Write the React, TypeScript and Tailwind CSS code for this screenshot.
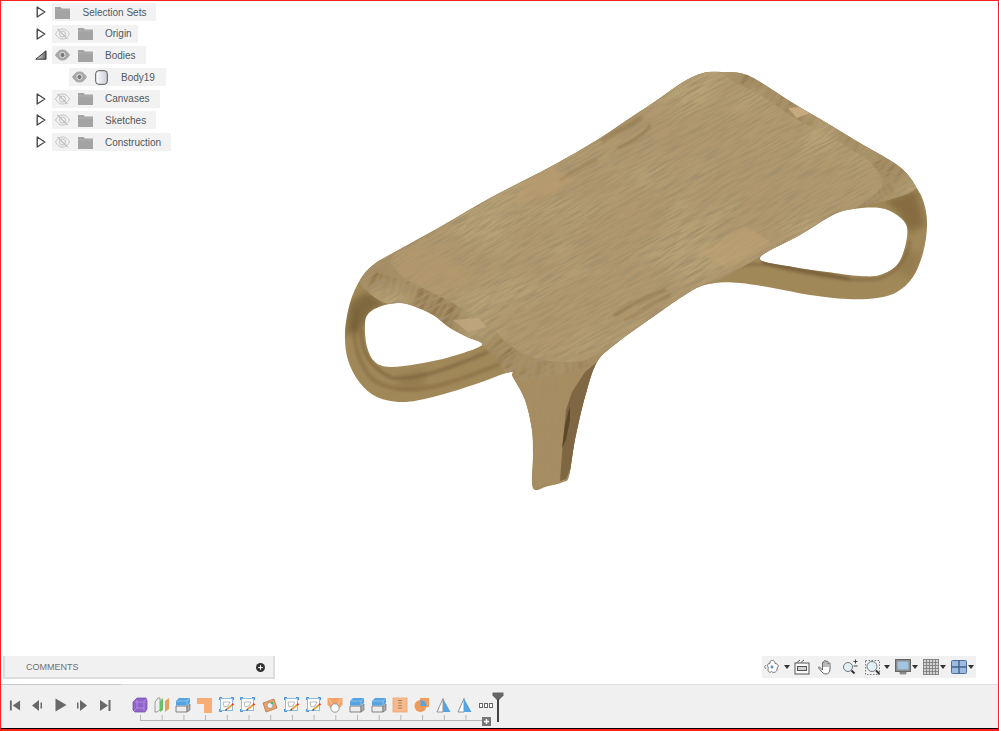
const font = { fontFamily: '"Liberation Sans", Arial, sans-serif' };

const Arrow = () => (
  <svg width="10" height="12" viewBox="0 0 10 12" className="shrink-0 ml-[1px]">
    <path d="M1.2 1 L8.8 6 L1.2 11 Z" fill="#fff" stroke="#4a4a4a" strokeWidth="1.4" strokeLinejoin="round" />
  </svg>
);

const ArrowOpen = () => (
  <svg width="12" height="10" viewBox="0 0 12 10" className="shrink-0">
    <defs>
      <linearGradient id="openFill" x1="0" x2="1" y1="0" y2="0">
        <stop offset="0" stopColor="#efefef" />
        <stop offset="1" stopColor="#666" />
      </linearGradient>
    </defs>
    <path d="M0.8 9.2 L11 0.8 V9.2 Z" fill="url(#openFill)" stroke="#333" strokeWidth="1" />
  </svg>
);

const Folder = () => (
  <svg width="15" height="13" viewBox="0 0 15 13" className="shrink-0">
    <path d="M0 1 H5.5 L7 2.5 H15 V13 H0 Z" fill="#a3a3a3" />
    <path d="M0 4 H15" stroke="#b5b5b5" strokeWidth="0.7" />
  </svg>
);

const Eye = ({ off }: { off?: boolean }) => (
  <svg width="15" height="12" viewBox="0 0 15 12" className="shrink-0">
    <path
      d="M0.5 6 C3 2 5 1 7.5 1 C10 1 12 2 14.5 6 C12 10 10 11 7.5 11 C5 11 3 10 0.5 6 Z"
      fill={off ? "none" : "#a8a8a8"}
      stroke={off ? "#c0c0c0" : "#a8a8a8"}
      strokeWidth="1"
    />
    <circle cx="7.5" cy="6" r={off ? 3 : 2.6} fill={off ? "none" : "#777"} stroke={off ? "#c0c0c0" : "#e8e8e8"} strokeWidth="1" />
    {off && <path d="M2.5 1 L12.5 11" stroke="#c0c0c0" strokeWidth="1.2" />}
  </svg>
);

const BodyIcon = () => (
  <svg width="13" height="15" viewBox="0 0 13 15" className="shrink-0">
    <defs>
      <linearGradient id="bodyFill" x1="0" x2="1" y1="0" y2="0">
        <stop offset="0" stopColor="#ffffff" />
        <stop offset="1" stopColor="#c9ced6" />
      </linearGradient>
    </defs>
    <rect x="0.7" y="0.7" width="11.6" height="13.6" rx="3" fill="url(#bodyFill)" stroke="#555" strokeWidth="1" />
  </svg>
);

const rows = [
  { name: "Selection Sets", arrow: true, noEye: true, width: "w-[104px]" },
  { name: "Origin", arrow: true, off: true, width: "w-[86px]" },
  { name: "Bodies", open: true, width: "w-[94px]" },
  { name: "Body19", child: true, width: "w-[97px]" },
  { name: "Canvases", arrow: true, off: true, width: "w-[108px]" },
  { name: "Sketches", arrow: true, off: true, width: "w-[104px]" },
  { name: "Construction", arrow: true, off: true, width: "w-[119px]" },
];

const Tree = () => (
  <div className="flex flex-col gap-[3.7px] pt-[2px] pl-[34px] h-[150px]">
    {rows.map((r) => (
      <div key={r.name} className="flex items-center h-[18px]">
        <div className="w-[17px] flex items-center justify-start shrink-0">
          {r.arrow && <Arrow />}
          {r.open && <ArrowOpen />}
        </div>
        <div className={`flex items-center h-[18px] bg-[#f2f2f2] text-[10px] text-[#505860] ${r.width} ${r.child ? "ml-[17px]" : ""}`}>
          {r.noEye ? (
            <>
              <span className="ml-[3px] flex"><Folder /></span>
              <span className="ml-[12.5px]">{r.name}</span>
            </>
          ) : r.child ? (
            <>
              <span className="ml-[3px] flex"><Eye /></span>
              <span className="ml-[8px] flex"><BodyIcon /></span>
              <span className="ml-[13px]">{r.name}</span>
            </>
          ) : (
            <>
              <span className="ml-[3px] flex"><Eye off={r.off} /></span>
              <span className="ml-[8px] flex"><Folder /></span>
              <span className="ml-[12px]">{r.name}</span>
            </>
          )}
        </div>
      </div>
    ))}
  </div>
);

// closed catmull-rom through page coordinates
const smooth = (pts: number[][]) => {
  const n = pts.length;
  let d = `M${pts[0][0]} ${pts[0][1]}`;
  for (let i = 0; i < n; i++) {
    const p0 = pts[(i - 1 + n) % n];
    const p1 = pts[i];
    const p2 = pts[(i + 1) % n];
    const p3 = pts[(i + 2) % n];
    const c1x = p1[0] + (p2[0] - p0[0]) / 6;
    const c1y = p1[1] + (p2[1] - p0[1]) / 6;
    const c2x = p2[0] - (p3[0] - p1[0]) / 6;
    const c2y = p2[1] - (p3[1] - p1[1]) / 6;
    d += ` C${c1x.toFixed(1)} ${c1y.toFixed(1)} ${c2x.toFixed(1)} ${c2y.toFixed(1)} ${p2[0]} ${p2[1]}`;
  }
  return d + " Z";
};

const outer = [
  [393, 253], [440, 227], [490, 198], [550, 167], [597, 140], [630, 118], [660, 98], [683, 82], [703, 73], [722, 72], [740, 73], [757, 80],
  [793, 103], [827, 123], [860, 143], [900, 167], [918, 190], [925, 207], [927, 227], [923, 253], [913, 277], [897, 292], [877, 298], [847, 299],
  [810, 295], [773, 288], [740, 283], [715, 283], [693, 290], [653, 317], [617, 343], [597, 362], [585, 397], [575, 440], [569, 476], [563, 482], [548, 486], [533, 488],
  [533, 455], [532, 430], [525, 400], [513, 377], [510, 372], [473, 385], [433, 397], [403, 402], [377, 397], [360, 383], [348, 360], [345, 333], [350, 303], [360, 280], [373, 265],
];
const holeL = [
  [400, 303], [385, 305], [370, 312], [365, 323], [367, 347], [375, 362], [390, 367], [417, 364], [450, 357], [482, 345], [467, 337], [450, 328], [433, 315], [413, 306],
];
const holeR = [
  [853, 209], [880, 208], [897, 215], [907, 227], [905, 247], [897, 265], [880, 275], [860, 276], [827, 272], [793, 267], [760, 258], [800, 235], [833, 215],
];
const plate = [
  [393, 253], [440, 227], [490, 198], [550, 167], [597, 140], [630, 118], [660, 98], [683, 82], [703, 73], [722, 72], [740, 73], [757, 80],
  [793, 103], [827, 123], [860, 143], [900, 167], [916, 188], [885, 201], [853, 209], [833, 215], [800, 235], [760, 257], [715, 282], [693, 290], [653, 317], [617, 343], [597, 362],
  [570, 372], [540, 378], [513, 380], [497, 360], [482, 345], [450, 328], [433, 315], [413, 306], [400, 303], [385, 303], [368, 292], [360, 280], [373, 265],
];
const panel = [
  [393, 256], [397, 270], [410, 281], [447, 300], [483, 320], [510, 345], [535, 358], [570, 362], [597, 355], [653, 317], [693, 290], [760, 257], [800, 235], [853, 209], [882, 186],
  [873, 165], [860, 155], [827, 135], [793, 117], [760, 95], [738, 84], [715, 72], [683, 80], [660, 98], [630, 118], [597, 140], [550, 167], [490, 198], [440, 227],
];

const silhouette = `${smooth(outer)} ${smooth(holeL)} ${smooth(holeR)}`;

const Table = () => (
  <svg viewBox="340 65 600 430" className="absolute left-[339px] top-[64px] w-[600px] h-[430px]">
    <defs>
      <clipPath id="sil">
        <path d={silhouette} clipRule="evenodd" />
      </clipPath>
      <clipPath id="plateClip">
        <path d={smooth(plate)} />
      </clipPath>
      <filter id="grain" x="0" y="0" width="100%" height="100%">
        <feTurbulence type="fractalNoise" baseFrequency="0.04 0.55" numOctaves="3" seed="7" />
        <feColorMatrix values="0 0 0 0 0.37  0 0 0 0 0.28  0 0 0 0 0.15  3.6 0 0 0 -1.5" />
      </filter>
      <filter id="blotch" x="0" y="0" width="100%" height="100%">
        <feTurbulence type="fractalNoise" baseFrequency="0.012 0.02" numOctaves="2" seed="21" />
        <feColorMatrix values="0 0 0 0 0.47  0 0 0 0 0.36  0 0 0 0 0.18  3.6 0 0 0 -1.6" />
      </filter>
      <filter id="legGrain" x="0" y="0" width="100%" height="100%">
        <feTurbulence type="fractalNoise" baseFrequency="0.28 0.025" numOctaves="2" seed="3" />
        <feColorMatrix values="0 0 0 0 0.38  0 0 0 0 0.27  0 0 0 0 0.12  3 0 0 0 -1.25" />
      </filter>
      <filter id="soft1">
        <feGaussianBlur stdDeviation="0.8" />
      </filter>
      <filter id="soft15">
        <feGaussianBlur stdDeviation="1.5" />
      </filter>
      <filter id="soft2">
        <feGaussianBlur stdDeviation="3" />
      </filter>
    </defs>

    <g clipPath="url(#sil)">
      <rect x="340" y="65" width="600" height="430" fill="#a08859" />

      {/* left loop */}
      <g fill="none" filter="url(#soft15)">
        <path d="M357 310 C352 335 354 355 370 377 C385 390 410 393 440 385 C460 380 480 372 500 364" stroke="#8f754a" strokeWidth="4" />
        <path d="M361 330 C361 350 370 368 392 378 C420 380 450 368 488 352" stroke="#856b43" strokeWidth="3" />
      </g>
      <path d="M345 335 L350 303 L366 292 L385 303 L370 312 L364 325 L358 332 Z" fill="#6b532f" opacity="0.6" filter="url(#soft2)" />
      <path d="M398 376 L425 370 L425 385 L400 390 Z" fill="#7a6037" opacity="0.3" filter="url(#soft2)" />

      {/* right loop */}
      <g fill="none" filter="url(#soft15)">
        <path d="M910 240 C908 258 898 272 878 279 C850 282 820 276 790 270 C770 265 755 262 740 266" stroke="#8b7146" strokeWidth="3" />
        <path d="M762 262 C790 268 815 272 850 279" stroke="#735c37" strokeWidth="3" />
      </g>
      <path d="M885 201 L916 190 L925 225 L908 233 L900 214 Z" fill="#7c6238" opacity="0.7" filter="url(#soft2)" />
      <path d="M905 250 L922 255 L912 278 L895 270 Z" fill="#7d6339" opacity="0.3" filter="url(#soft2)" />

      {/* front leg */}
      <path d="M495 355 L600 350 L597 362 L585 397 L575 440 L569 476 L563 482 L533 488 L533 455 L532 430 L525 400 Z" fill="#a68c62" />
      <rect x="505" y="360" width="100" height="130" filter="url(#legGrain)" />
      <path d="M597 362 L585 372 L572 392 L566 410 L563 440 L560 481 L566 479 L571 468 L575 440 L585 397 Z" fill="#7f6744" />
      <path d="M570 405 L565 425 L562 448 L566 440 L570 420 Z" fill="#5b4829" />

      {/* top of the table */}
      <path d={smooth(plate)} fill="#a68c62" />
      <g clipPath="url(#plateClip)">
        {/* cross grain on the two ends, under the panel */}
        <g fill="none" filter="url(#soft1)">
          <path d="M370 282 C385 290 395 290 405 293 C420 298 440 308 465 323 C480 333 490 342 505 360" stroke="#7b6138" strokeWidth="24" strokeDasharray="4 3 2 4 6 3 3 5 2 3" opacity="0.55" />
          <path d="M505 355 C525 370 550 372 592 362" stroke="#8a7148" strokeWidth="22" strokeDasharray="2 4 5 3" opacity="0.4" />
          <path d="M745 76 C765 90 793 110 827 129 C845 140 870 156 900 176" stroke="#7b6138" strokeWidth="16" strokeDasharray="5 3 2 6 3 7" opacity="0.45" />
          <path d="M892 188 C875 197 860 203 840 212" stroke="#7b6138" strokeWidth="10" strokeDasharray="3 3" opacity="0.4" />
        </g>
        <path d={smooth(panel)} fill="#b0976e" />
        <g transform="rotate(-30 640 280)">
          <rect x="150" y="-150" width="1000" height="860" filter="url(#blotch)" />
          <rect x="150" y="-150" width="1000" height="860" filter="url(#grain)" />
        </g>

        {/* pale end grain pieces */}
        <path d="M551 167 L575 180 L545 196 L515 205 L520 186 Z" fill="#bd9f71" opacity="0.55" filter="url(#soft15)" />
        <path d="M700 253 L725 268 L772 243 L745 226 Z" fill="#c0a274" opacity="0.6" filter="url(#soft15)" />
        <path d="M453 320 L478 318 L487 327 L468 332 Z" fill="#c0a57c" opacity="0.9" />
        <path d="M788 108 L802 107 L810 113 L797 118 Z" fill="#c9ad84" opacity="0.9" />
        <path d="M393 256 L397 270 L410 281 L440 296 L470 280 L440 250 Z" fill="#b89b6d" opacity="0.45" filter="url(#soft2)" />

        {/* knots */}
        <g fill="none" stroke="#7a6036" strokeLinecap="round" filter="url(#soft1)">
          <path d="M603 140 C615 133 630 125 640 118" strokeWidth="5" opacity="0.35" />
          <path d="M618 148 C632 142 645 134 650 125" strokeWidth="2" opacity="0.5" />
          <path d="M615 315 C630 305 645 296 665 290" strokeWidth="3" opacity="0.4" />
          <path d="M625 320 C640 312 655 302 670 295" strokeWidth="2" opacity="0.4" />
          <path d="M560 180 C572 172 585 165 597 160" strokeWidth="1.5" opacity="0.45" />
        </g>
      </g>
    </g>
  </svg>
);

const Caret = () => (
  <svg width="6" height="4" viewBox="0 0 6 4" className="shrink-0">
    <path d="M0 0 H6 L3 4 Z" fill="#333" />
  </svg>
);

const NavBar = () => (
  <div className="w-[214px] h-[22px] bg-[#f1f1f1] flex items-center pl-[2px]">
    {/* orbit */}
    <svg width="16" height="16" viewBox="0 0 16 16">
      <path d="M6 2.5 C8 0.5 11 1.5 11 4.5 C14 4.5 15.5 7.5 13 9 C14 12 10 15 7.5 12.5 C5 15 3 11 4.5 9 C2.5 7 4 3.5 6 4.5 Z" fill="#fff" stroke="#666" strokeWidth="0.9" />
      <path d="M2 6 L0.5 8 L2 10" stroke="#666" strokeWidth="0.8" fill="none" />
      <path d="M6.5 8 H9.5 M8 6.5 V9.5" stroke="#2b78c5" strokeWidth="1.2" />
    </svg>
    <span className="ml-[4px] flex"><Caret /></span>
    {/* look at */}
    <svg width="16" height="16" viewBox="0 0 16 16" className="ml-[4px]">
      <path d="M2.5 4 L6 1 M7 3.5 L10 1" stroke="#555" strokeWidth="1" />
      <rect x="1" y="4" width="14" height="11" fill="#fafafa" stroke="#555" strokeWidth="1" />
      <rect x="3.5" y="7.5" width="9" height="4" fill="#d0d0d0" stroke="#555" strokeWidth="1" />
    </svg>
    {/* pan hand */}
    <svg width="16" height="16" viewBox="0 0 16 16" className="ml-[8px]">
      <path d="M1.5 8 L4.5 11 V4 C4.5 2.8 6 2.8 6 4 V2.5 C6 1.2 8 1.2 8 2.5 V3 C8 1.8 10 1.8 10 3 V4.5 C10 3.6 12 3.6 12 4.5 V10 C12 13 10.5 15 8 15 C5.5 15 4.5 13.5 3 12 L0.8 9 C0.3 8 1 7.5 1.5 8 Z" fill="#fff" stroke="#555" strokeWidth="0.9" />
      <path d="M6 4 V8 M8 3 V8 M10 4 V8" stroke="#555" strokeWidth="0.8" />
    </svg>
    {/* zoom */}
    <svg width="16" height="16" viewBox="0 0 16 16" className="ml-[8px]">
      <circle cx="6" cy="8" r="4.5" fill="#dff0f7" stroke="#777" strokeWidth="1" />
      <path d="M9.5 11.5 L12.5 14.5" stroke="#333" strokeWidth="2" />
      <path d="M11.5 2.5 H15.5 M13.5 0.5 V4.5 M11.5 7 H15.5" stroke="#444" strokeWidth="1" />
    </svg>
    {/* fit */}
    <svg width="17" height="17" viewBox="0 0 17 17" className="ml-[7px]">
      <rect x="0.5" y="1.5" width="14" height="14" fill="none" stroke="#777" strokeWidth="1" strokeDasharray="1.5 1.5" />
      <circle cx="7" cy="7.5" r="5" fill="#e2f1f7" stroke="#777" strokeWidth="1" />
      <path d="M11 11.5 L14.5 15" stroke="#333" strokeWidth="2" />
    </svg>
    <span className="ml-[2px] flex"><Caret /></span>
    {/* display */}
    <svg width="16" height="16" viewBox="0 0 16 16" className="ml-[5px]">
      <rect x="0.5" y="0.5" width="15" height="12" fill="#8d8d8d" stroke="#666" />
      <rect x="2.5" y="2.5" width="11" height="8" fill="#a3c5e4" />
      <path d="M5 13 H11 V15 H5 Z" fill="#999" stroke="#777" strokeWidth="0.7" />
    </svg>
    <span className="ml-[1px] flex"><Caret /></span>
    {/* grid */}
    <svg width="16" height="16" viewBox="0 0 16 16" className="ml-[5px]">
      <rect x="0" y="0" width="16" height="16" fill="#d2d2d2" />
      <path d="M0.5 0 V16 M3.5 0 V16 M6.5 0 V16 M9.5 0 V16 M12.5 0 V16 M15.5 0 V16 M0 0.5 H16 M0 3.5 H16 M0 6.5 H16 M0 9.5 H16 M0 12.5 H16 M0 15.5 H16" stroke="#777" strokeWidth="0.8" />
    </svg>
    <span className="ml-[1px] flex"><Caret /></span>
    {/* viewports */}
    <svg width="16" height="14" viewBox="0 0 16 14" className="ml-[5px]">
      <rect x="0.5" y="0.5" width="15" height="13" rx="1" fill="#9dbbdc" stroke="#4d6f9c" />
      <path d="M8 0.5 V13.5 M0.5 7 H15.5" stroke="#3f618f" strokeWidth="1.4" />
    </svg>
    <span className="ml-[1px] flex"><Caret /></span>
  </div>
);

const Comments = () => (
  <div className="ml-[2px] w-[272px] h-[23px] bg-[#f1f1f1] border-l-2 border-r-2 border-b-2 border-[#dedede] flex items-center pt-[2px] pl-[21px] pr-[8px] justify-between">
    <span className="text-[9px] text-[#6d7075]">COMMENTS</span>
    <svg width="9" height="9" viewBox="0 0 9 9">
      <circle cx="4.5" cy="4.5" r="4.5" fill="#333" />
      <path d="M2.2 4.5 H6.8 M4.5 2.2 V6.8" stroke="#fff" strokeWidth="1.1" />
    </svg>
  </div>
);

const Transport = () => (
  <div className="flex items-center gap-[10px] w-[105px] ml-[8px]">
    <svg width="12" height="13" viewBox="0 0 13 13"><path d="M1 1 H3 V12 H1 Z M12 1 V12 L4 6.5 Z" fill="#686868" /></svg>
    <svg width="13" height="13" viewBox="0 0 13 13"><path d="M8 1 V12 L1 6.5 Z M9.5 3.5 H11 V9.5 H9.5 Z" fill="#686868" /></svg>
    <svg width="12" height="14" viewBox="0 0 12 14" className="ml-[1px]"><path d="M0.5 0.5 L11.5 7 L0.5 13.5 Z" fill="#686868" /></svg>
    <svg width="13" height="13" viewBox="0 0 13 13" className="ml-[-2px]"><path d="M5 1 V12 L12 6.5 Z M2 3.5 H3.5 V9.5 H2 Z" fill="#686868" /></svg>
    <svg width="12" height="13" viewBox="0 0 12 13" className="ml-[1px]"><path d="M1 1 V12 L9 6.5 Z M9.5 1 H11.5 V12 H9.5 Z" fill="#686868" /></svg>
  </div>
);

const Extrude = () => (
  <svg width="16" height="16" viewBox="0 0 16 16">
    <path d="M1 9 H12 V15 H1 Z" fill="#ececec" stroke="#777" strokeWidth="0.9" />
    <path d="M12 9 L15 7 V13 L12 15 Z" fill="#aaa" stroke="#777" strokeWidth="0.7" />
    <path d="M1 4 L4 1 H15 V6 L12 8.5 H1 Z" fill="#55a3e0" />
    <path d="M1 4 H12 L15 1 M12 4 V8" stroke="#a4d0f2" strokeWidth="0.7" fill="none" />
  </svg>
);

const Sketch = () => (
  <svg width="16" height="16" viewBox="0 0 16 16">
    <rect x="1.5" y="1.5" width="12" height="12" fill="#fff" stroke="#8fbce6" strokeWidth="1" />
    <path d="M4 5 H11 L9 9 L5 10 Z" fill="none" stroke="#aaa" strokeWidth="0.8" />
    <path d="M8 12 L13 8" stroke="#e9a13b" strokeWidth="2" />
    <path d="M13 8 L14.5 6.8" stroke="#e33" strokeWidth="2" />
    <path d="M6.5 13.5 L8 12" stroke="#555" strokeWidth="1.4" />
    <path d="M0.5 0.5 H3 M0.5 0.5 V3 M12 0.5 H14.5 V3 M0.5 12 V14.5 H3" stroke="#4a90d9" strokeWidth="1" fill="none" />
  </svg>
);

const timeline = [
  <svg key="0" width="16" height="16" viewBox="0 0 16 16">
    <path d="M3 3 L5 1 H14 L15 3 V12 L13 15 H3 L1 13 V5 Z" fill="#8f62cc" stroke="#7b55b3" strokeWidth="0.8" />
    <path d="M3 5 H12 V14 M12 5 L14.5 2 M5 3 V11 H12 M5 11 L2 14" stroke="#b89be0" strokeWidth="0.8" fill="none" />
  </svg>,
  <svg key="1" width="16" height="16" viewBox="0 0 16 16">
    <path d="M1 5 L4 1 H6 V13 L3 15 H1 Z" fill="#eee" stroke="#888" strokeWidth="0.8" />
    <path d="M6 4 L9 1 V13 L6 15 Z" fill="#6bbd6b" />
    <path d="M11 4 L15 1 V12 L11 15 Z" fill="#ee9e5c" />
  </svg>,
  <Extrude key="2" />,
  <svg key="3" width="16" height="16" viewBox="0 0 16 16"><path d="M0 1 H15 V16 H7 V7 H0 Z" fill="#f7ae76" /></svg>,
  <Sketch key="4" />,
  <Sketch key="5" />,
  <svg key="6" width="16" height="16" viewBox="0 0 16 16">
    <path d="M1 6 L12 2 L15 11 L4 15 Z" fill="#e8a26c" stroke="#b9794a" strokeWidth="0.8" />
    <circle cx="8" cy="8.5" r="3" fill="#eee" stroke="#888" strokeWidth="0.7" />
    <circle cx="10" cy="6" r="1.2" fill="#58b06b" />
  </svg>,
  <Sketch key="7" />,
  <Sketch key="8" />,
  <svg key="9" width="16" height="16" viewBox="0 0 16 16">
    <path d="M0.5 1 H15.5 V8 L11 12 H5 L0.5 8 Z" fill="#f3a46a" />
    <path d="M2 2 L6 9 M14 2 L10 9" stroke="#fbd3b2" strokeWidth="0.8" />
    <circle cx="8" cy="11" r="4.2" fill="#fff" stroke="#888" strokeWidth="0.9" />
  </svg>,
  <Extrude key="10" />,
  <Extrude key="11" />,
  <svg key="12" width="16" height="16" viewBox="0 0 16 16">
    <rect x="1" y="1" width="14" height="14" fill="#f7b98c" stroke="#f0a570" strokeWidth="0.8" />
    <path d="M6 3.5 H10 M6.5 6 H9.5 M6.5 8.5 H9.5 M6 11 H10" stroke="#9a7a5e" strokeWidth="0.9" />
  </svg>,
  <svg key="13" width="16" height="16" viewBox="0 0 16 16">
    <rect x="6" y="1" width="9" height="9" fill="#ee9e66" />
    <circle cx="6.5" cy="9" r="6" fill="#ec9a5e" />
    <path d="M6.5 9 V3 A6 6 0 0 1 12.5 9 Z" fill="#5aa4dd" />
  </svg>,
  <svg key="14" width="16" height="16" viewBox="0 0 16 16">
    <path d="M1 15 L7 1.5 V15 Z" fill="#fff" stroke="#888" strokeWidth="0.9" />
    <path d="M7 1.5 L14.5 15 H7 Z" fill="#55a3e0" />
  </svg>,
  <svg key="15" width="16" height="16" viewBox="0 0 16 16">
    <path d="M1 15 L7 1.5 V15 Z" fill="#fff" stroke="#888" strokeWidth="0.9" />
    <path d="M7 1.5 L14.5 15 H7 Z" fill="#55a3e0" />
  </svg>,
];

const Ruler = () => (
  <svg width="354" height="12" viewBox="0 0 354 12" className="block">
    <path d="M1 5.5 H343" stroke="#b5b5b5" strokeWidth="1" />
    {timeline.map((_, i) => (
      <path key={i} d={`M${1.5 + i * 21.7} 0 V5`} stroke="#b5b5b5" strokeWidth="1" />
    ))}
    <rect x="343" y="2" width="9" height="9" fill="#777" />
    <path d="M345 6.5 H350 M347.5 4 V9" stroke="#fff" strokeWidth="1.4" />
  </svg>
);

const Timeline = () => (
  <div className="mt-[5px] h-[44px] bg-[#f0f0f0] border-t border-[#dcdcdc] flex shrink-0 relative">
    <div className="absolute left-0 top-[-1px] w-[120px] h-[1px] bg-[#c9c9c9]" />
    <div className="flex items-center h-[40px]">
      <Transport />
    </div>
    <div className="ml-[18px] pt-[12px] flex flex-col gap-[2px]">
      <div className="flex gap-[5.7px] items-center">{timeline}</div>
      <div className="ml-[7px]">
        <Ruler />
      </div>
    </div>
    <div className="absolute left-[478px] top-[18px] flex gap-[1px]">
      <span className="w-[4px] h-[5px] border border-[#666] bg-white" />
      <span className="w-[4px] h-[5px] border border-[#666] bg-white" />
      <span className="w-[4px] h-[5px] border border-[#666] bg-white" />
    </div>
    <svg width="12" height="30" viewBox="0 0 12 30" className="absolute left-[491px] top-[7px]">
      <path d="M0.5 0.5 H11.5 V3.5 L7 8 H5 L0.5 3.5 Z" fill="#666" />
      <rect x="5" y="7" width="2" height="23" fill="#444" />
    </svg>
  </div>
);

export default function App() {
  return (
    <div style={font} className="relative w-[999px] h-[731px] bg-white flex flex-col overflow-hidden border-l border-r border-t border-[#ff2020]">
      <Tree />
      <Table />
      <div className="flex-1" />
      <div className="flex items-start justify-between pr-[22px] shrink-0">
        <Comments />
        <NavBar />
      </div>
      <Timeline />
      <div className="h-[3px] bg-black shrink-0 border-b-2 border-[#ff2020]" />
    </div>
  );
}
